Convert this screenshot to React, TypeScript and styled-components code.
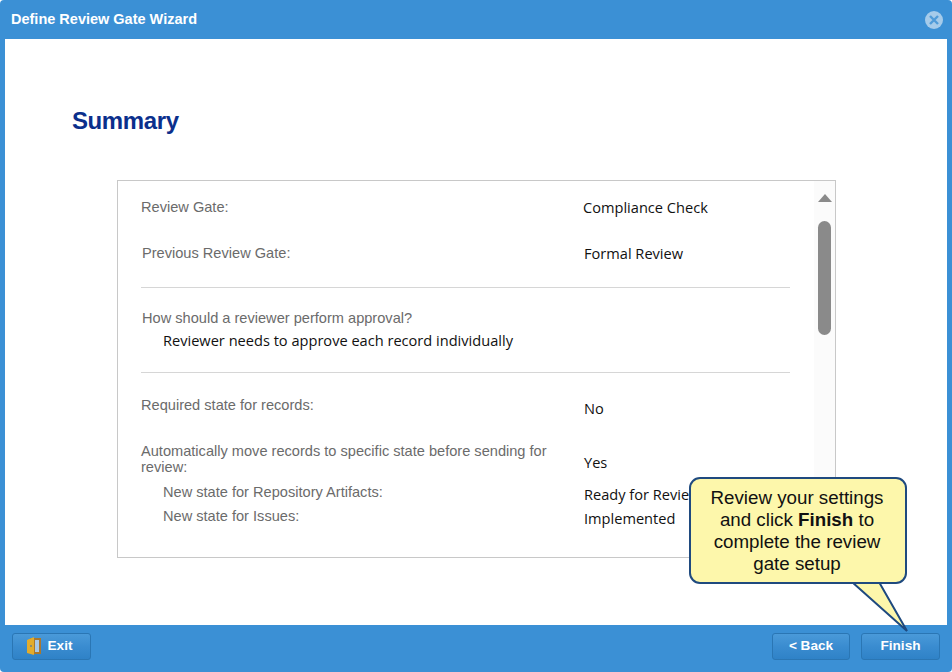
import { createGlobalStyle, styled } from "styled-components";

const GlobalStyle = createGlobalStyle`
    html, body {
        margin: 0;
        padding: 0;
        background: #ffffff;
    }
`;

const Wizard = styled.div`
    position: relative;
    width: 952px;
    height: 672px;
    display: flex;
    flex-direction: column;
    background-color: #3b90d5;
    border-radius: 4px;
    overflow: hidden;
    font-family: "Liberation Sans", Arial, sans-serif;
`;

const TitleBar = styled.header`
    height: 39px;
    flex: none;
    display: flex;
    align-items: center;
    justify-content: space-between;
    padding: 0 9px 2px 11px;
    box-sizing: border-box;
`;

const Title = styled.h1`
    margin: 0;
    font-size: 14.5px;
    font-weight: bold;
    color: #ffffff;
`;

const CloseIcon = styled.svg`
    width: 18px;
    height: 18px;
    margin-top: 3px;
`;

const Content = styled.main`
    flex: 1;
    margin: 0 5px;
    padding: 67px 111px 0 67px;
    background-color: #ffffff;
`;

const Heading = styled.h2`
    margin: 0 0 44px;
    font-size: 24px;
    line-height: 30px;
    font-weight: bold;
    letter-spacing: -0.4px;
    color: #0b2f8c;
`;

const SummaryPanel = styled.section`
    margin-left: 45px;
    width: 719px;
    height: 378px;
    box-sizing: border-box;
    display: flex;
    border: 1px solid #c8c8c8;
    overflow: hidden;
`;

const Details = styled.div`
    width: 672px;
    flex: none;
    padding: 18px 0 0 23px;
    box-sizing: border-box;
`;

const Row = styled.div<{ $indent?: number; $valueAt?: number; $height: number }>`
    display: grid;
    grid-template-columns: ${(p) => (p.$valueAt ?? 443) - (p.$indent ?? 0)}px 1fr;
    height: ${(p) => p.$height}px;
    margin-left: ${(p) => p.$indent ?? 0}px;
`;

const Label = styled.div`
    font-size: 14.6px;
    line-height: 16px;
    color: #6b6b6b;
`;

const Value = styled.div<{ $top?: number }>`
    font-family: "Open Sans", sans-serif;
    font-size: 14.6px;
    line-height: 17px;
    color: #111111;
    padding-top: ${(p) => p.$top ?? 0}px;
    white-space: nowrap;
`;

const Question = styled(Label)`
    margin-left: 1px;
`;

const Answer = styled(Value)`
    margin: 6px 0 0 22px;
`;

const Divider = styled.hr<{ $top: number; $bottom: number }>`
    width: 649px;
    height: 1px;
    margin: ${(p) => p.$top}px 0 ${(p) => p.$bottom}px;
    border: 0;
    background-color: #d6d6d6;
`;

const ScrollTrack = styled.div`
    flex: 1;
    position: relative;
    margin-left: 24px;
    width: 21px;
    background-color: #fbfbfb;
    display: flex;
    flex-direction: column;
    align-items: center;
    padding-top: 13px;
`;

const ScrollArrow = styled.div`
    width: 0;
    height: 0;
    border-left: 7px solid transparent;
    border-right: 7px solid transparent;
    border-bottom: 8px solid #8a8a8a;
`;

const ScrollThumb = styled.div`
    width: 13px;
    height: 114px;
    margin-top: 19px;
    border-radius: 7px;
    background-color: #8a8a8a;
`;

const Footer = styled.footer`
    height: 47px;
    flex: none;
    display: flex;
    align-items: flex-start;
    gap: 11px;
    padding: 8px 12px 0;
    box-sizing: border-box;
`;

const Button = styled.button<{ $width: number; $push?: boolean; $shift?: number }>`
    width: ${(p) => p.$width}px;
    height: 27px;
    margin-left: ${(p) => (p.$push ? "auto" : "0")};
    display: flex;
    align-items: center;
    justify-content: center;
    gap: 6px;
    padding: 0 ${(p) => p.$shift ?? 0}px 2px 0;
    border: 1px solid #2a76b4;
    border-radius: 3px;
    background: linear-gradient(#4a9ad9, #3a8cd0 50%, #2f82c7);
    font-family: "Liberation Sans", Arial, sans-serif;
    font-size: 13.6px;
    font-weight: bold;
    color: #ffffff;
`;

const Callout = styled.div`
    position: absolute;
    left: 689px;
    top: 477px;
    width: 218px;
    height: 107px;
    box-sizing: border-box;
    padding: 8px 4px 0 2px;
    background-color: #fdf7ab;
    border: 2px solid #1f4a7f;
    border-radius: 11px;
    font-size: 18.75px;
    line-height: 22px;
    text-align: center;
    color: #111111;
`;

const CalloutTail = styled.svg`
    position: absolute;
    left: 850px;
    top: 582px;
    width: 60px;
    height: 50px;
`;

export default function App() {
    return (
        <Wizard>
            <GlobalStyle />
            <TitleBar>
                <Title>Define Review Gate Wizard</Title>
                <CloseIcon viewBox="0 0 18 18">
                    <circle cx="9" cy="9" r="9" fill="#a5cbea" />
                    <path d="M5 5l8 8M13 5l-8 8" stroke="#4f9bd9" strokeWidth="2.4" />
                </CloseIcon>
            </TitleBar>

            <Content>
                <Heading>Summary</Heading>
                <SummaryPanel>
                    <Details>
                        <Row $height={46} $valueAt={442}>
                            <Label>Review Gate:</Label>
                            <Value>Compliance Check</Value>
                        </Row>
                        <Row $height={42} $indent={1}>
                            <Label>Previous Review Gate:</Label>
                            <Value>Formal Review</Value>
                        </Row>
                        <Divider $top={0} $bottom={22} />
                        <Question>How should a reviewer perform approval?</Question>
                        <Answer>Reviewer needs to approve each record individually</Answer>
                        <Divider $top={23} $bottom={24} />
                        <Row $height={46}>
                            <Label>Required state for records:</Label>
                            <Value $top={3}>No</Value>
                        </Row>
                        <Row $height={41}>
                            <Label>Automatically move records to specific state before sending for review:</Label>
                            <Value $top={11}>Yes</Value>
                        </Row>
                        <Row $height={24} $indent={22}>
                            <Label>New state for Repository Artifacts:</Label>
                            <Value $top={2}>Ready for Review</Value>
                        </Row>
                        <Row $height={24} $indent={22}>
                            <Label>New state for Issues:</Label>
                            <Value $top={2}>Implemented</Value>
                        </Row>
                    </Details>
                    <ScrollTrack>
                        <ScrollArrow />
                        <ScrollThumb />
                    </ScrollTrack>
                </SummaryPanel>
            </Content>

            <Footer>
                <Button $width={79} $shift={5}>
                    <svg width="16" height="18" viewBox="0 0 16 18">
                        <rect x="4" y="1" width="11" height="16" fill="#a9782e" />
                        <rect x="9" y="3" width="4" height="12" fill="#a9c8e6" />
                        <path d="M1 3l7-3v18l-7-2z" fill="#e3ac2c" />
                        <rect x="4" y="8" width="2" height="2" fill="#8c8c70" />
                    </svg>
                    Exit
                </Button>
                <Button $width={78} $push>&lt; Back</Button>
                <Button $width={79}>Finish</Button>
            </Footer>

            <CalloutTail viewBox="0 0 60 50">
                <path d="M2 0L57 49L29 0Z" fill="#fdf7ab" />
                <path d="M2 0L57 49L29 0" fill="none" stroke="#1f4a7f" strokeWidth="2" />
            </CalloutTail>
            <Callout>
                Review your settings and click <b>Finish</b> to complete the review gate setup
            </Callout>
        </Wizard>
    );
}
